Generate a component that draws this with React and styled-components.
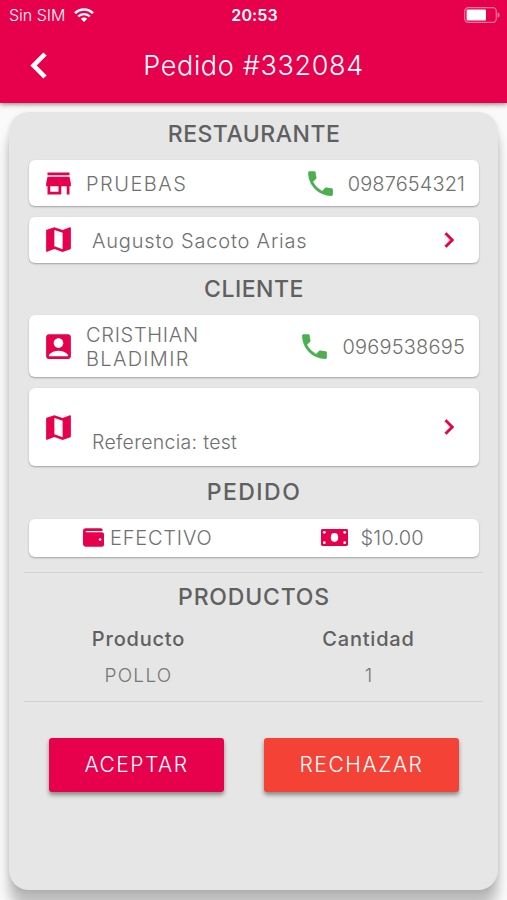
import React from 'react';
import styled, { createGlobalStyle } from 'styled-components';
import { MdStore, MdMap, MdAccountBox, MdPhone, MdChevronRight } from 'react-icons/md';
import { FaWallet } from 'react-icons/fa';

const ROJO = '#e7004c';

export default function App() {
    return (
        <>
            <EstiloGlobal />
            <Pantalla>
                <Encabezado>
                    <BarraEstado>
                        <Operador>
                            <Texto $s={16}>Sin SIM</Texto>
                            <IconoWifi />
                        </Operador>
                        <Hora>20:53</Hora>
                        <IconoBateria />
                    </BarraEstado>
                    <BarraTitulo>
                        <BotonVolver><IconoVolver /></BotonVolver>
                        <Titulo>Pedido #332084</Titulo>
                    </BarraTitulo>
                </Encabezado>
                <Panel>
                    <Seccion $alto={48} $abajo={5}><Texto $e={.5}>RESTAURANTE</Texto></Seccion>
                    <Tarjeta $alto={46}>
                        <MdStore size={33} />
                        <Nombre><Texto $e={1.5}>PRUEBAS</Texto></Nombre>
                        <Telefono>
                            <MdPhone size={33} />
                            <Texto $e={.1}>0987654321</Texto>
                        </Telefono>
                    </Tarjeta>
                    <Tarjeta $alto={46} $arriba={10.5}>
                        <MdMap size={33} />
                        <Direccion><Texto $e={.8}>Augusto Sacoto Arias</Texto></Direccion>
                        <Flecha size={30} />
                    </Tarjeta>
                    <Seccion $alto={52.5}><Texto $e={.5}>CLIENTE</Texto></Seccion>
                    <Tarjeta $alto={62}>
                        <MdAccountBox size={33} />
                        <Nombre>
                            <Texto $e={.7}>CRISTHIAN</Texto>
                            <Texto $e={1.3}>BLADIMIR</Texto>
                        </Nombre>
                        <Telefono>
                            <MdPhone size={33} />
                            <Texto $e={.2}>0969538695</Texto>
                        </Telefono>
                    </Tarjeta>
                    <Tarjeta $alto={78} $arriba={11}>
                        <MdMap size={33} />
                        <Direccion $abajo><Texto $s={19.5} $e={.3}>Referencia: test</Texto></Direccion>
                        <Flecha size={30} />
                    </Tarjeta>
                    <Seccion $alto={52.5}><Texto $e={1.5}>PEDIDO</Texto></Seccion>
                    <Tarjeta $alto={38} $pago>
                        <Pago $izq={54} $gap={6}>
                            <FaWallet size={21} />
                            <Texto $e={.8}>EFECTIVO</Texto>
                        </Pago>
                        <Pago $izq={109} $gap={12}>
                            <IconoBillete />
                            <Texto $e={.2}>$10.00</Texto>
                        </Pago>
                    </Tarjeta>
                    <Linea $arriba={15.5} />
                    <Seccion $alto={48}><Texto $e={.8}>PRODUCTOS</Texto></Seccion>
                    <Tabla>
                        <Columna><Texto $e={.8}>Producto</Texto></Columna>
                        <Columna><Texto $e={.8}>Cantidad</Texto></Columna>
                        <Celda><Texto $s={19} $e={1.3}>POLLO</Texto></Celda>
                        <Celda><Texto $s={19}>1</Texto></Celda>
                    </Tabla>
                    <Linea $arriba={7} />
                    <Botones>
                        <Boton $ancho={175}><Texto $e={1.5}>ACEPTAR</Texto></Boton>
                        <Boton $ancho={195} $rechazar><Texto $e={1.6}>RECHAZAR</Texto></Boton>
                    </Botones>
                </Panel>
            </Pantalla>
        </>
    );
}

const IconoWifi = () => (
    <svg width="20" height="14" viewBox="0 0 20 14" fill="none" stroke="#fff" strokeWidth="2.4">
        <path d="M1 5.2 C6 .2 14 .2 19 5.2" />
        <path d="M4.2 8.5 C7.5 5.3 12.5 5.3 15.8 8.5" />
        <path d="M6.8 10.7 C8.6 9 11.4 9 13.2 10.7 L10 13.9 Z" fill="#fff" stroke="none" />
    </svg>
);

const IconoBateria = () => (
    <svg width="36" height="16" viewBox="0 0 36 16">
        <rect x=".7" y=".7" width="31.6" height="14.6" rx="3.6" fill="none" stroke="#fff" strokeOpacity=".45" strokeWidth="1.2" />
        <rect x="2.6" y="2.6" width="19.4" height="10.8" rx="1" fill="#fff" />
        <path d="M33.6 5.3 Q35.6 6 35.6 8 Q35.6 10 33.6 10.7 Z" fill="#fff" fillOpacity=".5" />
    </svg>
);

const IconoVolver = () => (
    <svg width="17" height="27" viewBox="0 0 17 27" fill="none" stroke="#fff" strokeWidth="4.6">
        <path d="M15 2 L3.6 13.5 L15 25" />
    </svg>
);

const IconoBillete = () => (
    <svg width="27" height="17" viewBox="0 0 27 17">
        <rect width="27" height="17" rx="1.4" fill={ROJO} />
        <g fill="#fff">
            <ellipse cx="13.5" cy="8.5" rx="3.7" ry="4.4" />
            <circle cx="3.3" cy="3.3" r="1.4" />
            <circle cx="23.7" cy="3.3" r="1.4" />
            <circle cx="3.3" cy="13.7" r="1.4" />
            <circle cx="23.7" cy="13.7" r="1.4" />
        </g>
    </svg>
);

const EstiloGlobal = createGlobalStyle`
    body {
        margin: 0;
        font-family: 'Inter', 'Liberation Sans', sans-serif;
    }

    * {
        box-sizing: border-box;
    }
`;

const Texto = styled.span`
    ${({ $s }) => $s && `font-size: ${$s}px;`}
    letter-spacing: ${({ $e }) => $e || 0}px;
    white-space: nowrap;
`;

const Pantalla = styled.div`
    width: 507px;
    height: 900px;
    overflow: hidden;
    background: #fafafa;
`;

const Encabezado = styled.header`
    height: 103px;
    background: ${ROJO};
    color: #fff;
    box-shadow: 0 1px 5px rgba(0, 0, 0, .5);
`;

const BarraEstado = styled.div`
    height: 30px;
    display: grid;
    grid-template-columns: 1fr auto 1fr;
    align-items: center;
    padding: 0 7px 0 9px;

    > svg {
        justify-self: end;
    }
`;

const Operador = styled.div`
    display: flex;
    align-items: center;
    gap: 9px;
    font-weight: 300;
`;

const Hora = styled.div`
    font-size: 16px;
    font-weight: 600;
    letter-spacing: .1px;
`;

const BarraTitulo = styled.div`
    height: 71px;
    display: grid;
    grid-template-columns: 78px 1fr 78px;
    align-items: center;
`;

const BotonVolver = styled.button`
    display: flex;
    justify-content: center;
    padding: 0 2px 0 0;
    border: none;
    background: none;
`;

const Titulo = styled.h1`
    margin: 0;
    font-size: 27px;
    font-weight: 300;
    letter-spacing: .65px;
    text-align: center;
`;

const Panel = styled.main`
    width: 489px;
    height: 778px;
    margin: 9px 0 0 9px;
    padding: 0 19px 0 20px;
    border-radius: 20px;
    background: #e6e6e6;
    box-shadow: 0 18px 12px rgba(0, 0, 0, .24), 0 2px 6px rgba(0, 0, 0, .1);
`;

const Seccion = styled.h2`
    height: ${({ $alto }) => $alto}px;
    margin: 0;
    padding-bottom: ${({ $abajo }) => $abajo || 0}px;
    display: flex;
    align-items: center;
    justify-content: center;
    color: #606060;
    font-size: 23px;
    font-weight: 500;
`;

const Tarjeta = styled.div`
    height: ${({ $alto }) => $alto}px;
    margin-top: ${({ $arriba }) => $arriba || 0}px;
    padding: ${({ $pago }) => $pago ? '0' : '0 14px 0 13px'};
    display: flex;
    align-items: center;
    border-radius: 6px;
    background: #fff;
    box-shadow: 0 1px 2px rgba(0, 0, 0, .3);
    color: #707070;
    font-size: 20px;
    font-weight: 300;

    svg {
        color: ${ROJO};
        flex: none;
    }
`;

const Flecha = styled(MdChevronRight)`
    margin-right: 1px;

    path:last-child {
        stroke: ${ROJO};
        stroke-width: .4px;
    }
`;

const Nombre = styled.div`
    flex: 1;
    display: flex;
    flex-direction: column;
    padding: 2px 0 0 11px;
    line-height: 24px;
`;

const Telefono = styled.div`
    display: flex;
    align-items: center;
    gap: 11px;

    svg {
        color: #4caf50;
    }

    span {
        padding-top: 2px;
    }
`;

const Direccion = styled.div`
    flex: 1;
    padding-left: 17px;
    padding-top: ${({ $abajo }) => $abajo ? '30px' : '2px'};
`;

const Pago = styled.div`
    display: flex;
    align-items: center;
    margin-left: ${({ $izq }) => $izq}px;
    gap: ${({ $gap }) => $gap}px;
`;

const Linea = styled.hr`
    height: 1px;
    margin: ${({ $arriba }) => $arriba}px -4px 0 -5px;
    border: none;
    background: #d2d2d2;
`;

const Tabla = styled.div`
    display: grid;
    grid-template-columns: 219px 241px;
    grid-template-rows: 36px 37px;
    align-items: center;
    text-align: center;
`;

const Columna = styled.div`
    color: #606060;
    font-size: 20px;
    font-weight: 500;
`;

const Celda = styled.div`
    color: #757575;
    font-weight: 300;
`;

const Botones = styled.div`
    display: flex;
    gap: 40px;
    padding: 36px 0 0 20px;
`;

const Boton = styled.button`
    width: ${({ $ancho }) => $ancho}px;
    height: 54px;
    padding: 0 0 2px;
    border: none;
    border-radius: 3px;
    background: ${({ $rechazar }) => $rechazar ? '#f44336' : ROJO};
    box-shadow: 0 3px 4px rgba(0, 0, 0, .4);
    color: #fff;
    font-family: inherit;
    font-size: 21px;
    font-weight: 300;
`;
